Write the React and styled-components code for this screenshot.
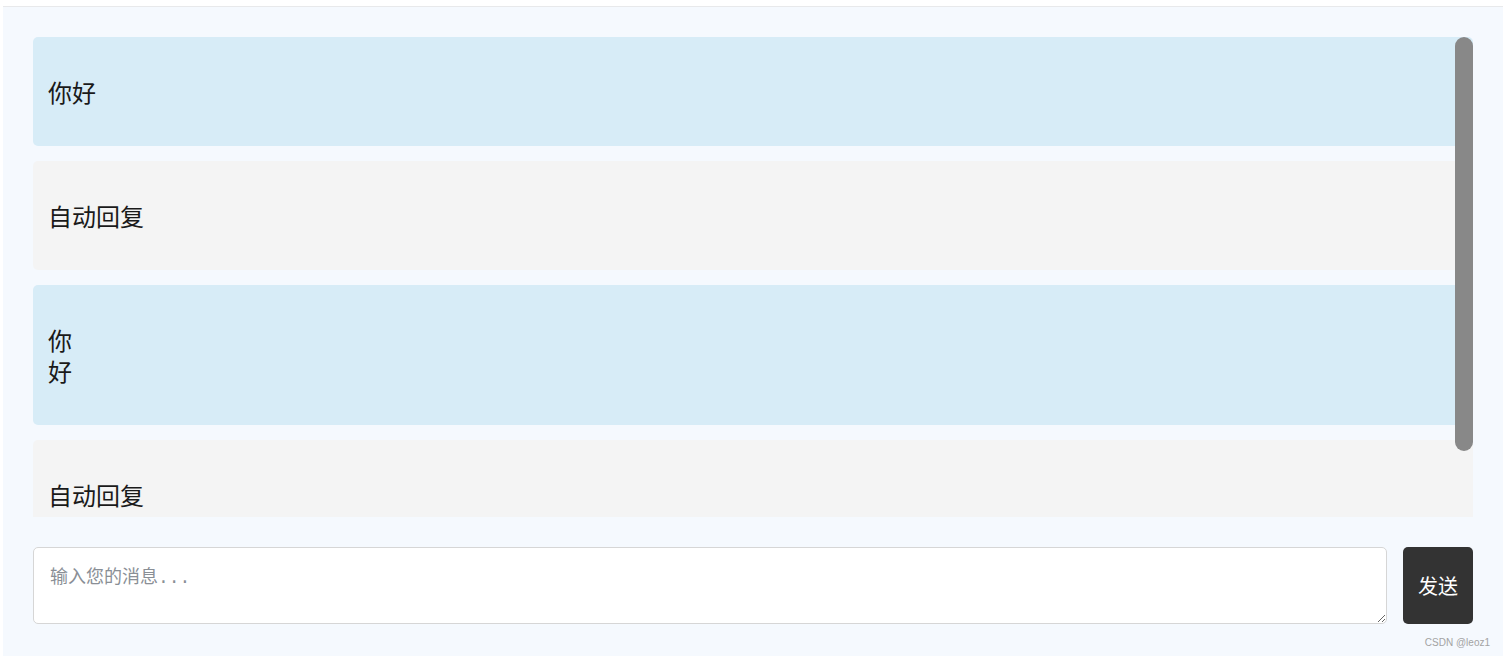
import React, { useState } from 'react';
import styled, { createGlobalStyle } from 'styled-components';

const GlobalStyle = createGlobalStyle`
  html, body {
    margin: 0;
    padding: 0;
    background: #ffffff;
    font-family: "Noto Sans CJK SC", "Noto Sans", sans-serif;
  }
  * {
    box-sizing: border-box;
  }
`;

const Page = styled.div`
  padding: 6px 2px 0 3px;
  min-height: 656px;
  display: flex;
  flex-direction: column;
`;

const ChatContainer = styled.div`
  flex: 1;
  position: relative;
  background: #f5f9fe;
  border-top: 1px solid #e8e9eb;
  padding: 30px;
  display: flex;
  flex-direction: column;
  gap: 30px;
`;

const MessageArea = styled.div`
  position: relative;
  height: 480px;
`;

const MessageList = styled.div`
  height: 100%;
  overflow: hidden;
  display: flex;
  flex-direction: column;
  gap: 15px;
`;

// scroll thumb drawn over the list (headless browser hides native scrollbars)
const ScrollThumb = styled.div`
  position: absolute;
  top: 0;
  right: 0;
  width: 18px;
  height: 414px;
  border-radius: 9px;
  background: #888888;
`;

const Bubble = styled.div`
  flex-shrink: 0;
  background: ${props => (props.$from === 'user' ? '#d7ecf7' : '#f4f4f4')};
  border-radius: 5px;
  padding: 15px;
  color: #1a1a1a;
  font-size: 24px;
  line-height: 31px;

  p {
    margin: 24px 0;
  }
`;

const InputRow = styled.div`
  display: flex;
  gap: 16px;
  height: 77px;
`;

const MessageInput = styled.textarea`
  flex: 1;
  border: 1px solid #d6d6d6;
  border-radius: 5px;
  background: #ffffff;
  padding: 14px 16px;
  font-family: "Liberation Mono", "Noto Sans CJK SC", monospace;
  font-size: 18px;
  color: #333;
  outline: none;

  &::placeholder {
    color: #8a8f96;
  }
`;

const SendButton = styled.button`
  width: 70px;
  border: none;
  border-radius: 5px;
  background: #333333;
  color: #ffffff;
  font-family: "Noto Sans CJK SC", sans-serif;
  font-size: 20px;
  cursor: pointer;
`;

const Watermark = styled.div`
  position: absolute;
  right: 13px;
  bottom: 8px;
  font-family: "Liberation Sans", Arial, sans-serif;
  font-size: 10px;
  color: #a3a3a3;
`;

const initialMessages = [
  { from: 'user', lines: ['你好'] },
  { from: 'bot', lines: ['自动回复'] },
  { from: 'user', lines: ['你', '好'] },
  { from: 'bot', lines: ['自动回复'] },
];

const App = () => {
  const [messages] = useState(initialMessages);
  const [text, setText] = useState('');

  return (
    <>
      <GlobalStyle />
      <Page>
        <ChatContainer>
          <MessageArea>
            <MessageList>
              {messages.map((m, i) => (
                <Bubble key={i} $from={m.from}>
                  <p>
                    {m.lines.map((line, j) => (
                      <React.Fragment key={j}>
                        {j > 0 && <br />}
                        {line}
                      </React.Fragment>
                    ))}
                  </p>
                </Bubble>
              ))}
            </MessageList>
            <ScrollThumb />
          </MessageArea>
          <InputRow>
            <MessageInput
              placeholder="输入您的消息..."
              value={text}
              onChange={e => setText(e.target.value)}
            />
            <SendButton>发送</SendButton>
          </InputRow>
          <Watermark>CSDN @leoz1</Watermark>
        </ChatContainer>
      </Page>
    </>
  );
};

export default App;
